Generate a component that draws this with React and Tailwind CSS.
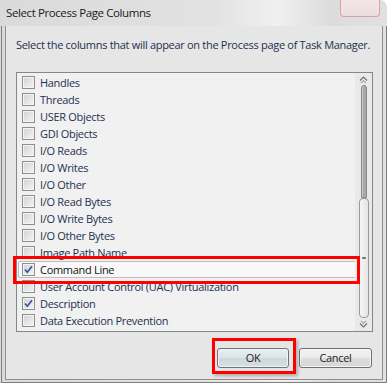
import React from 'react';

const items = [
  ['Handles', false],
  ['Threads', false],
  ['USER Objects', false],
  ['GDI Objects', false],
  ['I/O Reads', false],
  ['I/O Writes', false],
  ['I/O Other', false],
  ['I/O Read Bytes', false],
  ['I/O Write Bytes', false],
  ['I/O Other Bytes', false],
  ['Image Path Name', false],
  ['Command Line', true, true],
  ['User Account Control (UAC) Virtualization', false],
  ['Description', true],
  ['Data Execution Prevention', false],
];

const CheckBox = ({ checked }) => (
  <div className="w-[13px] h-[13px] shrink-0 border border-[#8e8f8f] bg-[linear-gradient(135deg,#d2d2d2,#f4f4f4)] shadow-[inset_0_0_0_1px_#f4f4f4] flex items-center justify-center">
    {checked && (
      <svg width="11" height="11" viewBox="0 0 11 11">
        <path d="M2 5.5 L4.3 8.2 L9 2.2" fill="none" stroke="#3b53a0" strokeWidth="1.7" />
      </svg>
    )}
  </div>
);

const Arrow = ({ down }) => (
  <svg width="9" height="8" viewBox="0 0 9 8" className={down ? 'rotate-180' : ''}>
    <path d="M1 4.5 L4.5 1 L8 4.5" fill="none" stroke="#6f6f6f" strokeWidth="1.2" />
    <path d="M2 7 L4.5 4.5 L7 7" fill="none" stroke="#a9a9a9" strokeWidth="1.2" />
  </svg>
);

export default function App() {
  return (
    <div className="w-[388px] h-[385px] bg-white relative overflow-hidden font-['Open_Sans','Noto_Sans',sans-serif] text-[11px] leading-[16px] tracking-[-0.3px]">
      <div className="w-[387px] h-[383px] flex flex-col rounded-tr-[7px] bg-[linear-gradient(90deg,#dadada_0%,#e2e2e2_55%,#f0f0f0_72%,#dcdcdc_85%,#e0e0e0_100%)]">
        {/* title bar */}
        <div className="h-[26px] flex items-start relative">
          <span className="pl-[6px] pt-[5px] text-[11.5px] text-[#1a1a1a] tracking-[-0.4px]">Select Process Page Columns</span>
          <div className="absolute left-[340px] top-0 w-[40px] h-[17px] border border-t-0 border-[#d9a3a3] rounded-b-[4px] bg-[linear-gradient(180deg,#f3e6e6,#ecdede)]" />
        </div>

        {/* frame */}
        <div className="flex-1 flex flex-col ml-[1px] border-x border-b border-[#7d7d7d] px-[3px] pb-[2px]">
          <div className="flex-1 flex flex-col border-x border-b border-[#8f8f8f] bg-[#e6e6e6]">
            <p className="pt-[11px] pl-[10px] text-[#1e3050] whitespace-nowrap">
              Select the columns that will appear on the Process page of Task Manager.
            </p>

            <div className="mt-[19px] ml-[10px] w-[357px] h-[260px] border border-[#828790] bg-[#f1f1f1] flex">
              <div className="flex-1 flex flex-col pt-[1px] overflow-hidden">
                {items.map(([label, checked, selected]) => (
                  <div
                    key={label}
                    className={`h-[17px] shrink-0 flex items-center gap-[5px] whitespace-nowrap ${selected
                      ? 'ml-[1px] w-[339px] pl-[3px] border border-[#bdbdbd] rounded-[2px] bg-[#f8f8f8] text-[#111]'
                      : 'pl-[5px] text-[#1e3050]'
                      }`}
                  >
                    <CheckBox checked={checked} />
                    <span>{label}</span>
                  </div>
                ))}
              </div>

              {/* scrollbar */}
              <div className="w-[17px] bg-[#e9e9e9] flex flex-col items-center">
                <div className="h-[12px] flex items-end pb-[1px]">
                  <Arrow />
                </div>
                <div className="w-[6px] h-[113px] rounded-t-[3px] border border-[#8a8a8a] bg-[#a8a8a8] shadow-[inset_1px_0_0_#c9c9c9]" />
                <div className="w-[10px] h-[120px] rounded-[4px] border border-[#9a9a9a] bg-[linear-gradient(90deg,#f6f6f6,#e4e4e4)] flex items-center justify-center">
                  <div className="w-[4px] h-[2px] rounded-full bg-[#707070]" />
                </div>
                <div className="h-[12px] flex items-start pt-[2px]">
                  <Arrow down />
                </div>
              </div>
            </div>

            <div className="mt-[16px] flex justify-end gap-[10px] pr-[10px]">
              <button className="w-[72px] h-[20px] rounded-[3px] border border-[#6e7378] bg-[linear-gradient(180deg,#e9eef1_0%,#dce4e8_50%,#cdd7dc_51%,#d6dfe3_100%)] shadow-[inset_0_0_0_1px_#eef3f5] text-[#1a1a1a] leading-[18px]">
                OK
              </button>
              <button className="w-[73px] h-[20px] rounded-[3px] border border-[#707070] bg-[linear-gradient(180deg,#f2f2f2_0%,#ebebeb_50%,#dddddd_51%,#d6d6d6_100%)] shadow-[inset_0_0_0_1px_#f6f6f6] text-[#1a1a1a] leading-[18px]">
                Cancel
              </button>
            </div>
          </div>
        </div>
      </div>

      {/* annotation boxes */}
      <div className="absolute left-[13px] top-[256px] w-[347px] h-[28px] border-[3px] border-[#ff0000]" />
      <div className="absolute left-[212px] top-[338px] w-[84px] h-[36px] border-[3px] border-[#ff0000] shadow-[2px_2px_3px_rgba(0,0,0,0.25)]" />
    </div>
  );
}
